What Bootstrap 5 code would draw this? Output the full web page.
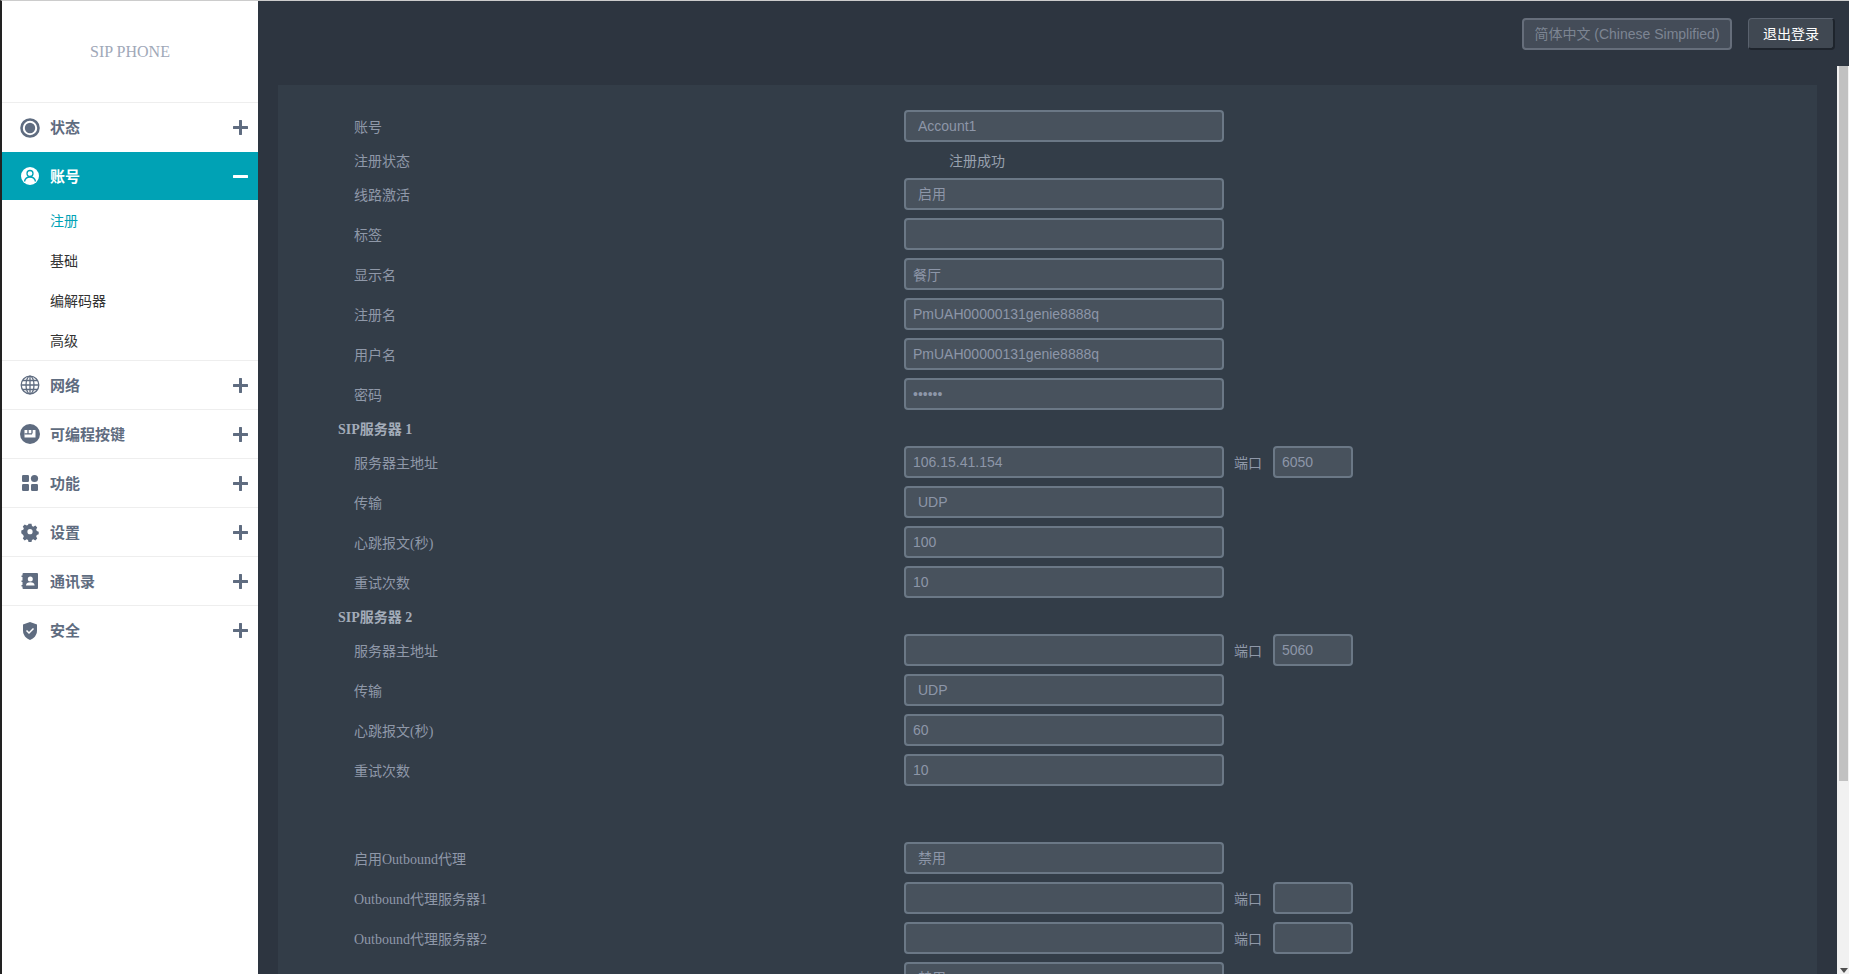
<!DOCTYPE html>
<html lang="zh-CN">
<head>
<meta charset="utf-8">
<title>SIP PHONE</title>
<link href="https://cdn.jsdelivr.net/npm/bootstrap@5.3.0/dist/css/bootstrap.min.css" rel="stylesheet">
<style>
html,body{height:100%;overflow:hidden}
body{font-family:"Liberation Serif","Noto Sans CJK SC",serif;font-size:14px;background:#2d3540;border-top:1px solid #ccc;border-left:2px solid #222}
.shell{height:973px}
.side{width:256px;background:#fff;flex:none}
.brand{height:102px;color:#a0a8b8;font-size:16px;border-bottom:1px solid #eee;flex:none}
.mitem{height:49px;padding:0 10px 0 18px;color:#5f6c80;font-weight:700;font-size:15px;border-bottom:1px solid #eee;font-family:"Noto Sans CJK SC",sans-serif;flex:none}
.mitem svg.ico{width:20px;height:20px;margin-right:10px;flex:none}
.mitem svg.pm{width:15px;height:15px;flex:none}
.mitem.on{background:#00a2b5;color:#fff;border-bottom:0;height:48px}
.mitem.nob{border-bottom:0}
.subs{border-bottom:1px solid #eee;flex:none}
.sub{height:40px;padding-left:48px;color:#333;font-family:"Noto Sans CJK SC",sans-serif}
.sub.on{color:#00a2b5}
.main{min-width:0}
.top{height:65px;padding:17px 14px 0 0;gap:16px;flex:none}
.lang{width:210px;height:32px;background:#444c58;border:2px solid #666e7b;border-radius:4px;color:#7d8593;font-family:"Liberation Sans","Noto Sans CJK SC",sans-serif;font-size:14px;line-height:28px;text-align:center}
.quit{width:87px;height:32px;background:#404852;border:1px solid #5a626e;border-bottom:2px solid #1e242c;border-right:2px solid #1e242c;border-radius:4px;color:#fff;font-family:"Noto Sans CJK SC",sans-serif;font-size:14px;line-height:28px;text-align:center}
.body-wrap{min-height:0}
.scroller{padding:19px 20px 0}
.panel{background:#333d48;height:900px;padding:21px 0 0 60px;color:#8f98a8}
.fline{height:40px}
.fline.st{height:28px}
.fhead{height:28px;font-weight:700;color:#a3acb9;padding-top:2px}
.flabel{width:566px;padding:2px 0 0 16px;flex:none}
.fctl.form-control,.fctl.form-select{width:320px;height:32px;flex:none;background:#48525d none;border:2px solid #6b7886;border-radius:4px;color:#8d96a8;font-family:"Liberation Sans","Noto Sans CJK SC",sans-serif;font-size:14px;padding:0 7px;box-shadow:none;appearance:none}
.fctl.form-select{padding-left:12px}
.portl{width:49px;padding:2px 0 0 10px;flex:none}
.fctl.portc.form-control{width:80px}
.stv{padding-left:45px;font-family:"Noto Sans CJK SC",sans-serif;color:#98a1ae}
.gapper{height:48px}
.sbar{width:12px;flex:none;background:#f1f1f1;padding:0 1px 0 2px}
.thumb{height:715px;background:#c1c1c1}
.arrow{width:0;height:0;border-left:4px solid transparent;border-right:4px solid transparent;border-top:5px solid #505050;margin:0 auto 1px}
</style>
</head>
<body>
<div class="shell d-flex">
  <aside class="side d-flex flex-column">
    <div class="brand d-flex align-items-center justify-content-center">SIP PHONE</div>
    <div class="mitem nob d-flex align-items-center">
      <svg class="ico" viewBox="0 0 20 20"><circle cx="10" cy="10" r="8.500" fill="none" stroke="#5f6c80" stroke-width="2.600"/><circle cx="10" cy="10" r="5.200" fill="#5f6c80"/></svg>
      <span class="flex-grow-1">状态</span>
      <svg class="pm" viewBox="0 0 15 15"><path d="M7.500 1v13M1 7.500h13" stroke="#5f6c80" stroke-width="3" stroke-linecap="round"/></svg>
    </div>
    <div class="mitem on d-flex align-items-center">
      <svg class="ico" viewBox="0 0 20 20"><circle cx="10" cy="10" r="9" fill="#fff"/><circle cx="10" cy="7.500" r="3" fill="none" stroke="#00a2b5" stroke-width="1.300"/><path d="M4.500 15.500c.6-3 2.600-4.500 5.500-4.500s4.900 1.500 5.500 4.500" fill="none" stroke="#00a2b5" stroke-width="1.300"/></svg>
      <span class="flex-grow-1">账号</span>
      <svg class="pm" viewBox="0 0 15 15"><path d="M1 7.500h13" stroke="#fff" stroke-width="3" stroke-linecap="round"/></svg>
    </div>
    <div class="subs">
      <div class="sub on d-flex align-items-center">注册</div>
      <div class="sub d-flex align-items-center">基础</div>
      <div class="sub d-flex align-items-center">编解码器</div>
      <div class="sub d-flex align-items-center">高级</div>
    </div>
    <div class="mitem d-flex align-items-center">
      <svg class="ico" viewBox="0 0 20 20" fill="none" stroke="#5f6c80" stroke-width="1.300"><circle cx="10" cy="10" r="8.800"/><ellipse cx="10" cy="10" rx="4" ry="8.800"/><path d="M10 1v18M1.300 10h17.400M2.500 5.500h15M2.500 14.500h15"/></svg>
      <span class="flex-grow-1">网络</span>
      <svg class="pm" viewBox="0 0 15 15"><path d="M7.500 1v13M1 7.500h13" stroke="#5f6c80" stroke-width="3" stroke-linecap="round"/></svg>
    </div>
    <div class="mitem d-flex align-items-center">
      <svg class="ico" viewBox="0 0 20 20"><circle cx="10" cy="10" r="10" fill="#5f6c80"/><path d="M4.500 6h11v7.500h-11z" fill="#fff"/><path d="M8 6v3.500M12 6v3.500M4.500 9.800h7.500" stroke="#5f6c80" stroke-width="1.300"/></svg>
      <span class="flex-grow-1">可编程按键</span>
      <svg class="pm" viewBox="0 0 15 15"><path d="M7.500 1v13M1 7.500h13" stroke="#5f6c80" stroke-width="3" stroke-linecap="round"/></svg>
    </div>
    <div class="mitem d-flex align-items-center">
      <svg class="ico" viewBox="0 0 20 20" fill="#5f6c80"><rect x="2" y="2" width="7" height="7" rx="1.200"/><circle cx="14.500" cy="5.500" r="3.600"/><rect x="2" y="11" width="7" height="7" rx="1.200"/><rect x="11" y="11" width="7" height="7" rx="1.200"/></svg>
      <span class="flex-grow-1">功能</span>
      <svg class="pm" viewBox="0 0 15 15"><path d="M7.500 1v13M1 7.500h13" stroke="#5f6c80" stroke-width="3" stroke-linecap="round"/></svg>
    </div>
    <div class="mitem d-flex align-items-center">
      <svg class="ico" viewBox="0 0 20 20"><path fill="#5f6c80" fill-rule="evenodd" d="M8.300 1h3.400l.6 2.500 1.500.7 2.300-1.200 2.200 2.300-1.200 2.200.7 1.600 2.200.9v3l-2.200.9-.7 1.600 1.200 2.200-2.200 2.300-2.300-1.200-1.500.7-.6 2.300H8.300l-.6-2.300-1.500-.7-2.300 1.200-2.200-2.300 1.200-2.200-.7-1.600L0 11.700v-3l2.200-.9.700-1.600L1.700 4l2.200-2.300 2.300 1.200 1.500-.7zM10 7a3 3 0 1 0 0 6 3 3 0 0 0 0-6z" transform="translate(1.300 1) scale(.87)"/></svg>
      <span class="flex-grow-1">设置</span>
      <svg class="pm" viewBox="0 0 15 15"><path d="M7.500 1v13M1 7.500h13" stroke="#5f6c80" stroke-width="3" stroke-linecap="round"/></svg>
    </div>
    <div class="mitem d-flex align-items-center">
      <svg class="ico" viewBox="0 0 20 20"><path fill="#5f6c80" fill-rule="evenodd" d="M3.500 2H17a1 1 0 0 1 1 1v14a1 1 0 0 1-1 1H3.500a1 1 0 0 1-1-1v-1.500H1.500V14h1v-3h-1V9.500h1V6h-1V4.500h1V3a1 1 0 0 1 1-1zM10.300 5.500a2.500 2.500 0 1 0 0 5 2.500 2.500 0 0 0 0-5zM6 14.500h8.600c0-2-1.700-3.200-4.300-3.200S6 12.500 6 14.500z"/></svg>
      <span class="flex-grow-1">通讯录</span>
      <svg class="pm" viewBox="0 0 15 15"><path d="M7.500 1v13M1 7.500h13" stroke="#5f6c80" stroke-width="3" stroke-linecap="round"/></svg>
    </div>
    <div class="mitem nob d-flex align-items-center">
      <svg class="ico" viewBox="0 0 20 20"><path fill="#5f6c80" d="M10 1l7 2.500v6c0 4.500-3 8-7 9.500-4-1.500-7-5-7-9.500v-6z"/><path d="M6.500 9.500l2.500 2.500 4.500-4.500" fill="none" stroke="#fff" stroke-width="1.500"/></svg>
      <span class="flex-grow-1">安全</span>
      <svg class="pm" viewBox="0 0 15 15"><path d="M7.500 1v13M1 7.500h13" stroke="#5f6c80" stroke-width="3" stroke-linecap="round"/></svg>
    </div>
  </aside>
  <div class="main flex-grow-1 d-flex flex-column">
    <header class="top d-flex justify-content-end align-items-start">
      <div class="lang">简体中文 (Chinese Simplified)</div>
      <div class="quit">退出登录</div>
    </header>
    <div class="body-wrap flex-grow-1 d-flex">
      <div class="scroller flex-grow-1 overflow-hidden">
        <form class="panel">
          <div class="fline d-flex align-items-center"><span class="flabel">账号</span><select class="fctl form-select"><option>Account1</option></select></div>
          <div class="fline st d-flex align-items-center"><span class="flabel">注册状态</span><span class="stv">注册成功</span></div>
          <div class="fline d-flex align-items-center"><span class="flabel">线路激活</span><select class="fctl form-select"><option>启用</option></select></div>
          <div class="fline d-flex align-items-center"><span class="flabel">标签</span><input class="fctl form-control" type="text" value=""></div>
          <div class="fline d-flex align-items-center"><span class="flabel">显示名</span><input class="fctl form-control" type="text" value="餐厅"></div>
          <div class="fline d-flex align-items-center"><span class="flabel">注册名</span><input class="fctl form-control" type="text" value="PmUAH00000131genie8888q"></div>
          <div class="fline d-flex align-items-center"><span class="flabel">用户名</span><input class="fctl form-control" type="text" value="PmUAH00000131genie8888q"></div>
          <div class="fline d-flex align-items-center"><span class="flabel">密码</span><input class="fctl form-control" type="password" value="123456"></div>
          <div class="fhead d-flex align-items-center">SIP服务器 1</div>
          <div class="fline d-flex align-items-center"><span class="flabel">服务器主地址</span><input class="fctl form-control" type="text" value="106.15.41.154"><span class="portl">端口</span><input class="fctl portc form-control" type="text" value="6050"></div>
          <div class="fline d-flex align-items-center"><span class="flabel">传输</span><select class="fctl form-select"><option>UDP</option></select></div>
          <div class="fline d-flex align-items-center"><span class="flabel">心跳报文(秒)</span><input class="fctl form-control" type="text" value="100"></div>
          <div class="fline d-flex align-items-center"><span class="flabel">重试次数</span><input class="fctl form-control" type="text" value="10"></div>
          <div class="fhead d-flex align-items-center">SIP服务器 2</div>
          <div class="fline d-flex align-items-center"><span class="flabel">服务器主地址</span><input class="fctl form-control" type="text" value=""><span class="portl">端口</span><input class="fctl portc form-control" type="text" value="5060"></div>
          <div class="fline d-flex align-items-center"><span class="flabel">传输</span><select class="fctl form-select"><option>UDP</option></select></div>
          <div class="fline d-flex align-items-center"><span class="flabel">心跳报文(秒)</span><input class="fctl form-control" type="text" value="60"></div>
          <div class="fline d-flex align-items-center"><span class="flabel">重试次数</span><input class="fctl form-control" type="text" value="10"></div>
          <div class="gapper"></div>
          <div class="fline d-flex align-items-center"><span class="flabel">启用Outbound代理</span><select class="fctl form-select"><option>禁用</option></select></div>
          <div class="fline d-flex align-items-center"><span class="flabel">Outbound代理服务器1</span><input class="fctl form-control" type="text" value=""><span class="portl">端口</span><input class="fctl portc form-control" type="text" value=""></div>
          <div class="fline d-flex align-items-center"><span class="flabel">Outbound代理服务器2</span><input class="fctl form-control" type="text" value=""><span class="portl">端口</span><input class="fctl portc form-control" type="text" value=""></div>
          <div class="fline d-flex align-items-center"><span class="flabel">NAT</span><select class="fctl form-select"><option>禁用</option></select></div>
        </form>
      </div>
      <div class="sbar d-flex flex-column justify-content-between">
        <div class="thumb"></div>
        <div class="arrow"></div>
      </div>
    </div>
  </div>
</div>
<script src="https://cdn.jsdelivr.net/npm/bootstrap@5.3.0/dist/js/bootstrap.bundle.min.js"></script>
</body>
</html>
